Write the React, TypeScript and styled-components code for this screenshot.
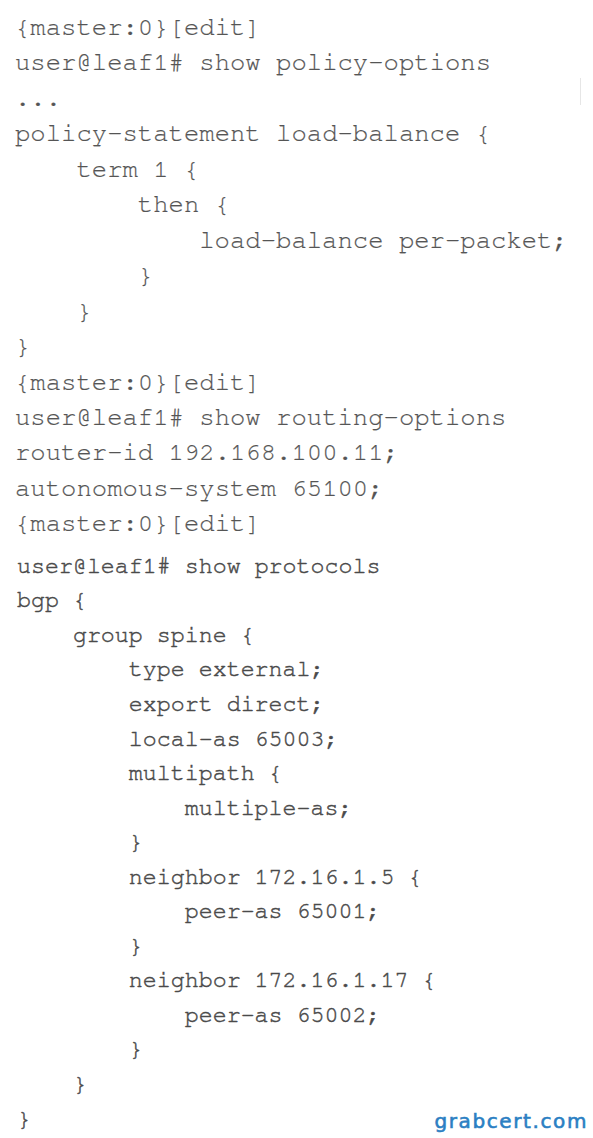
import React from "react";
import styled, { createGlobalStyle } from "styled-components";

const Global = createGlobalStyle`
  html, body { margin: 0; padding: 0; background: #ffffff; }
  body { width: 593px; height: 1138px; overflow: hidden; }
`;

const Sheet = styled.div`
  position: relative;
  width: 593px;
  height: 1138px;
  overflow: hidden;
  background: #ffffff;
  display: flex;
  flex-direction: column;
`;

const Block = styled.div<{ $size: number; $lh: number; $pad: number; $top: number; $color: string; $heavy?: boolean }>`
  font-family: "Nimbus Mono PS", "FreeMono", "Courier 10 Pitch", "Courier New", "Liberation Mono", monospace;
  font-size: ${(p) => p.$size}px;
  line-height: ${(p) => p.$lh}px;
  padding-left: ${(p) => p.$pad}px;
  margin-top: ${(p) => p.$top}px;
  color: ${(p) => p.$color};
  white-space: pre;
  -webkit-text-stroke: ${(p) => (p.$heavy ? "0.45px" : "0.2px")} ${(p) => p.$color};
`;

const Line = styled.div<{ $indent: number }>`
  padding-left: ${(p) => p.$indent}ch;
`;

const EdgeMark = styled.span`
  position: absolute;
  left: 580px;
  top: 78px;
  width: 1px;
  height: 27px;
  background: #e6e6e6;
`;

const Watermark = styled.span`
  position: absolute;
  right: 5px;
  bottom: 5px;
  font-family: "DejaVu Sans", Verdana, sans-serif;
  font-size: 20px;
  font-weight: 400;
  letter-spacing: 1.6px;
  -webkit-text-stroke: 0.6px #2b7fc3;
  color: #2b7fc3;
`;

type L = [number, string];

const top: L[] = [
  [0, "{master:0}[edit]"],
  [0, "user@leaf1# show policy-options"],
  [0, "..."],
  [0, "policy-statement load-balance {"],
  [4, "term 1 {"],
  [8, "then {"],
  [12, "load-balance per-packet;"],
  [8, "}"],
  [4, "}"],
  [0, "}"],
  [0, "{master:0}[edit]"],
  [0, "user@leaf1# show routing-options"],
  [0, "router-id 192.168.100.11;"],
  [0, "autonomous-system 65100;"],
  [0, "{master:0}[edit]"],
];

const bottom: L[] = [
  [0, "user@leaf1# show protocols"],
  [0, "bgp {"],
  [4, "group spine {"],
  [8, "type external;"],
  [8, "export direct;"],
  [8, "local-as 65003;"],
  [8, "multipath {"],
  [12, "multiple-as;"],
  [8, "}"],
  [8, "neighbor 172.16.1.5 {"],
  [12, "peer-as 65001;"],
  [8, "}"],
  [8, "neighbor 172.16.1.17 {"],
  [12, "peer-as 65002;"],
  [8, "}"],
  [4, "}"],
  [0, "}"],
];

export default function App() {
  return (
    <Sheet>
      <Global />
      <Block $size={25.6} $lh={35.45} $pad={15} $top={10} $color="#555555">
        {top.map(([i, t], k) => (
          <Line key={k} $indent={i}>{t}</Line>
        ))}
      </Block>
      <Block $size={23.3} $lh={34.55} $pad={17} $top={7} $color="#4a4a4a" $heavy>
        {bottom.map(([i, t], k) => (
          <Line key={k} $indent={i}>{t}</Line>
        ))}
      </Block>
      <EdgeMark />
      <Watermark>grabcert.com</Watermark>
    </Sheet>
  );
}
